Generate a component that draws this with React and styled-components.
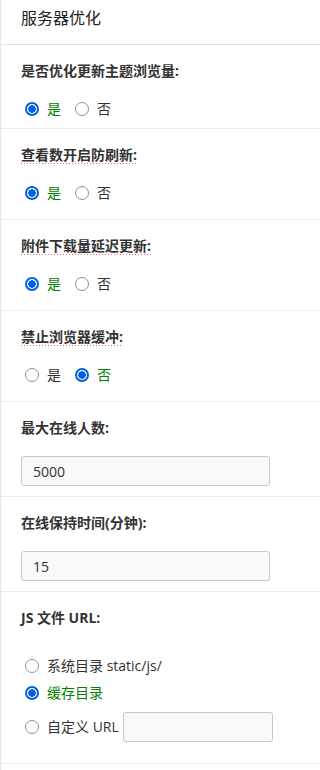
import React from "react";
import styled, { createGlobalStyle } from "styled-components";

const GlobalStyle = createGlobalStyle`
  body {
    margin: 0;
    background: #fff;
    font-family: "Open Sans", "Noto Sans CJK SC", sans-serif;
    color: #333;
  }
`;

const Page = styled.div`
  min-height: 770px;
  border-left: 1px solid #e6e6e6;
  box-sizing: border-box;
`;

const Header = styled.div`
  padding: 6px 20px 14px;
  font-size: 16px;
  line-height: 24px;
  color: #222;
  border-bottom: 1px solid #e0e0e0;
`;

const Row = styled.div`
  padding: 14px 20px ${(p) => p.$pb || 14}px;
  border-bottom: 1px dotted #dcdcdc;
`;

const Label = styled.div`
  font-size: 14px;
  font-weight: bold;
  line-height: 24px;
  color: #333;
  margin-bottom: ${(p) => p.$mb || 14}px;
`;

const Tip = styled.span`
  display: inline-block;
  line-height: 18px;
  background: linear-gradient(to right, #f26b6b 34%, transparent 0) left bottom / 3px 1px repeat-x;
`;

const Options = styled.div`
  display: flex;
  flex-direction: ${(p) => (p.$column ? "column" : "row")};
  gap: ${(p) => (p.$column ? 3 : 0)}px;
`;

const Option = styled.label`
  display: flex;
  align-items: center;
  min-height: 24px;
  margin-top: ${(p) => p.$mt || 0}px;
  margin-right: 10px;
  font-size: 14px;
  line-height: 24px;
  color: ${(p) => (p.$on ? "#008000" : "#333")};
`;

const Radio = styled.input.attrs({ type: "radio" })`
  appearance: none;
  box-sizing: border-box;
  width: 14px;
  height: 14px;
  margin: 0 8px 0 4px;
  border: 1px solid #8f8f9d;
  border-radius: 50%;
  background: #fff;

  &:checked {
    border: 2px solid #0060df;
    background: radial-gradient(circle, #0060df 0 3.5px, #fff 4px);
  }
`;

const TextInput = styled.input.attrs({ type: "text" })`
  box-sizing: border-box;
  width: ${(p) => p.$w || 249}px;
  height: 30px;
  margin-left: ${(p) => p.$ml || 0}px;
  padding: 0 11px;
  border: 1px solid #c8c8c8;
  border-radius: 3px;
  background: #f9f9f9;
  font-family: inherit;
  font-size: 14px;
  color: #333;
  outline: none;
`;

const YesNo = ({ name, value, tip, label, pb }) => {
  const text = tip ? <Tip>{label}</Tip> : label;
  return (
    <Row $pb={pb}>
      <Label>{text}</Label>
      <Options>
        <Option $on={value === 1}>
          <Radio name={name} defaultChecked={value === 1} />是
        </Option>
        <Option $on={value === 0}>
          <Radio name={name} defaultChecked={value === 0} />否
        </Option>
      </Options>
    </Row>
  );
};

const NumberRow = ({ label, value }) => (
  <Row $pb={10}>
    <Label $mb={16}>{label}</Label>
    <TextInput defaultValue={value} />
  </Row>
);

export default function App() {
  return (
    <Page>
      <GlobalStyle />
      <Header>服务器优化</Header>
      <YesNo name="opt1" value={1} label="是否优化更新主题浏览量:" pb={7} />
      <YesNo name="opt2" value={1} label="查看数开启防刷新:" tip />
      <YesNo name="opt3" value={1} label="附件下载量延迟更新:" tip />
      <YesNo name="opt4" value={0} label="禁止浏览器缓冲:" tip />
      <NumberRow label="最大在线人数:" value="5000" />
      <NumberRow label="在线保持时间(分钟):" value="15" />
      <Row $pb={21}>
        <Label $mb={24}>JS 文件 URL:</Label>
        <Options $column>
          <Option>
            <Radio name="jsurl" />系统目录 static/js/
          </Option>
          <Option $on>
            <Radio name="jsurl" defaultChecked />缓存目录
          </Option>
          <Option $mt={4}>
            <Radio name="jsurl" />自定义 URL
            <TextInput $w={150} $ml={4} />
          </Option>
        </Options>
      </Row>
    </Page>
  );
}
